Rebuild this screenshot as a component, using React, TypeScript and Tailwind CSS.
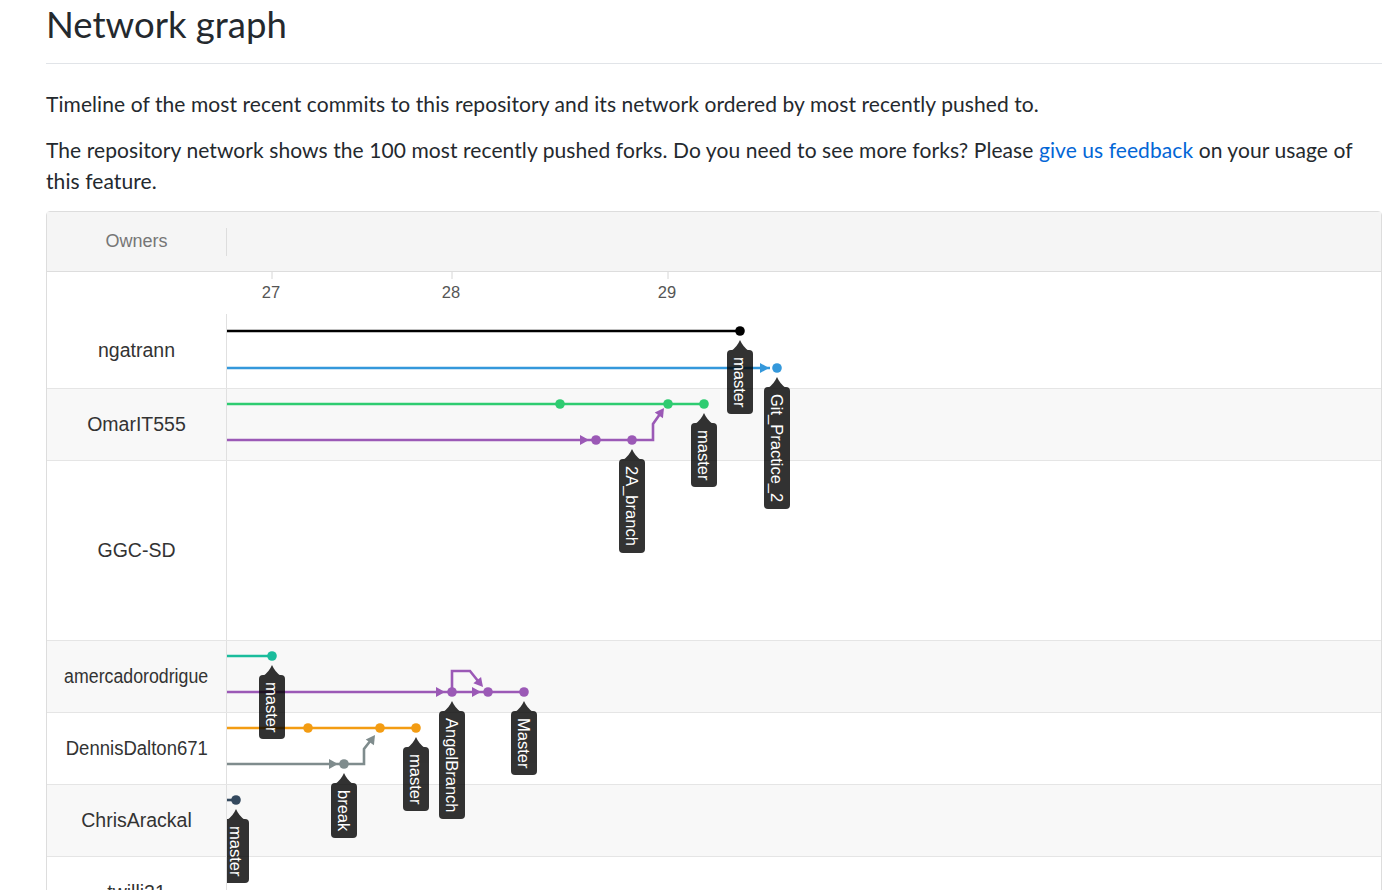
import React from "react";

type Row = { name: string; cls: string; nameCls?: string };

const rows: Row[] = [
  { name: "ngatrann", cls: "h-[117px] bg-white pt-[42px]" },
  { name: "OmarIT555", cls: "h-[72px] bg-[#f8f8f8]" },
  { name: "GGC-SD", cls: "h-[180px] bg-white" },
  { name: "amercadorodrigue", cls: "h-[72px] bg-[#f8f8f8]", nameCls: "scale-x-[0.91]" },
  { name: "DennisDalton671", cls: "h-[72px] bg-white", nameCls: "scale-x-[0.95]" },
  { name: "ChrisArackal", cls: "h-[72px] bg-[#f8f8f8]" },
  { name: "twilli21", cls: "h-[72px] bg-white" },
];

const C = {
  black: "#000000",
  blue: "#3498db",
  green: "#2ecc71",
  purple: "#9b59b6",
  teal: "#1abc9c",
  orange: "#f39c12",
  gray: "#7f8c8d",
  navy: "#34495e",
};

function Arrow({ x, y, angle, color }: { x: number; y: number; angle: number; color: string }) {
  const a = (angle * Math.PI) / 180;
  const len = 9;
  const hw = 5;
  const bx = x - len * Math.cos(a);
  const by = y - len * Math.sin(a);
  const px = -Math.sin(a) * hw;
  const py = Math.cos(a) * hw;
  return <polygon points={`${x},${y} ${bx + px},${by + py} ${bx - px},${by - py}`} fill={color} />;
}

function Dot({ x, y, color }: { x: number; y: number; color: string }) {
  return <circle cx={x} cy={y} r={4.8} fill={color} />;
}

const FS = 16.5;
function Label({ x, y, text, em }: { x: number; y: number; text: string; em: number }) {
  const top = y + 19;
  const h = Math.round(em * FS + 14);
  return (
    <g>
      <g opacity={0.8}>
        <path d={`M${x} ${y + 9} Q${x + 3} ${y + 16} ${x + 9} ${top + 1} L${x - 9} ${top + 1} Q${x - 3} ${y + 16} ${x} ${y + 9} Z`} fill="#000" />
        <rect x={x - 13} y={top} width={26} height={h} rx={4} fill="#000" />
      </g>
      <text
        x={x}
        y={top + 7}
        transform={`rotate(90 ${x} ${top + 7})`}
        fill="#fff"
        fontFamily="'Liberation Sans', Arial, sans-serif"
        fontSize={FS}
        dominantBaseline="central"
      >
        {text}
      </text>
    </g>
  );
}

function Graph() {
  const sw = 2.6;
  return (
    <svg
      className="absolute left-[180px] top-0 pointer-events-none"
      width={1154}
      height={657}
      viewBox="227 272 1154 657"
    >
      {[
        [272, "27"],
        [452, "28"],
        [668, "29"],
      ].map(([x, t]) => (
        <g key={t as string}>
          <line x1={x as number} y1={272} x2={x as number} y2={279} stroke="#d6d6d6" strokeWidth={1} />
          <text
            x={(x as number) - 1}
            y={292}
            textAnchor="middle"
            dominantBaseline="central"
            fill="#555"
            fontFamily="'Liberation Sans', Arial, sans-serif"
            fontSize={16.5}
          >
            {t}
          </text>
        </g>
      ))}

      {/* ngatrann */}
      <path d="M226 331 H740" stroke={C.black} strokeWidth={sw} fill="none" />
      <Dot x={740} y={331} color={C.black} />
      <path d="M226 368 H770" stroke={C.blue} strokeWidth={sw} fill="none" />
      <Arrow x={769} y={368} angle={0} color={C.blue} />
      <Dot x={777} y={368} color={C.blue} />

      {/* OmarIT555 */}
      <path d="M226 404 H704" stroke={C.green} strokeWidth={sw} fill="none" />
      <Dot x={560} y={404} color={C.green} />
      <Dot x={668} y={404} color={C.green} />
      <Dot x={704} y={404} color={C.green} />
      <path d="M226 440 H632 H653 V424 L660 414" stroke={C.purple} strokeWidth={sw} fill="none" strokeLinejoin="miter" />
      <Arrow x={589} y={440} angle={0} color={C.purple} />
      <Arrow x={664} y={408} angle={-55} color={C.purple} />
      <Dot x={596} y={440} color={C.purple} />
      <Dot x={632} y={440} color={C.purple} />

      {/* amercadorodrigue */}
      <path d="M226 656 H272" stroke={C.teal} strokeWidth={sw} fill="none" />
      <Dot x={272} y={656} color={C.teal} />
      <path d="M226 692 H524" stroke={C.purple} strokeWidth={sw} fill="none" />
      <path d="M452 692 V671 H470 L478 681" stroke={C.purple} strokeWidth={sw} fill="none" />
      <Arrow x={445} y={692} angle={0} color={C.purple} />
      <Arrow x={481} y={692} angle={0} color={C.purple} />
      <Arrow x={483} y={687} angle={50} color={C.purple} />
      <Dot x={452} y={692} color={C.purple} />
      <Dot x={488} y={692} color={C.purple} />
      <Dot x={524} y={692} color={C.purple} />

      {/* DennisDalton671 */}
      <path d="M226 728 H416" stroke={C.orange} strokeWidth={sw} fill="none" />
      <Dot x={308} y={728} color={C.orange} />
      <Dot x={380} y={728} color={C.orange} />
      <Dot x={416} y={728} color={C.orange} />
      <path d="M226 764 H344 H364 V749 L371 740" stroke={C.gray} strokeWidth={sw} fill="none" />
      <Arrow x={338} y={764} angle={0} color={C.gray} />
      <Arrow x={375} y={735} angle={-55} color={C.gray} />
      <Dot x={344} y={764} color={C.gray} />

      {/* ChrisArackal */}
      <path d="M226 800 H236" stroke={C.navy} strokeWidth={sw} fill="none" />
      <Dot x={236} y={800} color={C.navy} />

      <Label x={740} y={331} text="master" em={3.056} />
      <Label x={777} y={368} text="Git_Practice_2" em={6.558} />
      <Label x={704} y={404} text="master" em={3.056} />
      <Label x={632} y={440} text="2A_branch" em={4.836} />
      <Label x={272} y={656} text="master" em={3.056} />
      <Label x={452} y={692} text="AngelBranch" em={5.725} />
      <Label x={524} y={692} text="Master" em={3.056} />
      <Label x={416} y={728} text="master" em={3.056} />
      <Label x={344} y={764} text="break" em={2.501} />
      <Label x={236} y={800} text="master" em={3.056} />
    </svg>
  );
}

export default function App() {
  return (
    <div className="min-h-screen bg-white pl-[46px] pr-[3px] text-[#24292e] font-[family-name:Lato,sans-serif]">
      <h1 className="h-[64px] border-b border-[#e1e4e8] pt-[2px] text-[36.5px] leading-[45px] font-normal">
        Network graph
      </h1>
      <p className="mt-[24px] text-[21px] leading-[31px] tracking-[0.08px]">
        Timeline of the most recent commits to this repository and its network ordered by most recently pushed to.
      </p>
      <p className="mt-[15px] text-[21px] leading-[31px] tracking-[0.08px]">
        The repository network shows the 100 most recently pushed forks. Do you need to see more forks? Please{" "}
        <a className="text-[#0366d6]" href="#">
          give us feedback
        </a>{" "}
        on your usage of this feature.
      </p>

      <div className="mt-[15px] rounded-t-[4px] border border-[#dddddd] font-[family-name:'Liberation_Sans',Arial,sans-serif]">
        <div className="flex h-[60px] items-center border-b border-[#dddddd] bg-[#f5f5f5]">
          <div className="flex w-[179px] justify-center text-[18px] text-[#767676]">Owners</div>
          <div className="h-[28px] w-px bg-[#dddddd]" />
        </div>
        <div className="relative">
          {rows.map((r) => (
            <div key={r.name} className={`flex border-b border-[#e5e5e5] ${r.cls}`}>
              <div className="flex w-[180px] items-center justify-center border-r border-[#e0e0e0] text-[19.5px] text-[#333]">
                <span className={`whitespace-nowrap ${r.nameCls ?? ""}`}>{r.name}</span>
              </div>
              <div className="flex-1" />
            </div>
          ))}
          <Graph />
        </div>
      </div>
    </div>
  );
}
